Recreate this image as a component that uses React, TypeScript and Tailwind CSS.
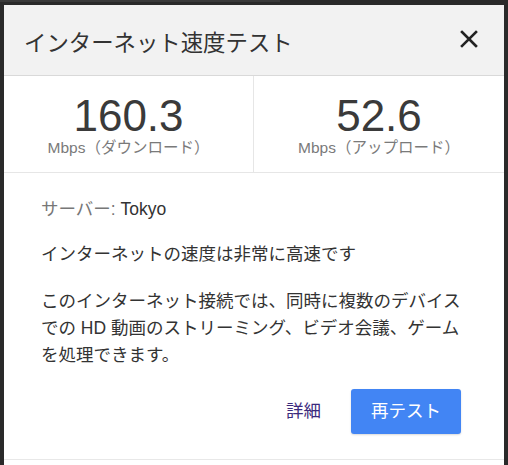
const font = { fontFamily: '"Liberation Sans", "Noto Sans CJK JP", sans-serif' };

function CloseIcon() {
  return (
    <svg width="20" height="20" viewBox="0 0 20 20" className="text-[#222] mb-[10px]">
      <path d="M3 3 L17 17 M17 3 L3 17" stroke="currentColor" strokeWidth="2.6" strokeLinecap="square" />
    </svg>
  );
}

function Stat({ value, label, border }: { value: string; label: string; border?: boolean }) {
  return (
    <div className={`flex flex-col items-center pt-[18px] ${border ? 'border-r border-[#e6e6e6]' : ''}`}>
      <div className="text-[44px] leading-[44px] text-[#3a3a3a]">{value}</div>
      <div className="text-[15.5px] leading-[20px] text-[#7a7a7a]">{label}</div>
    </div>
  );
}

export default function App() {
  return (
    <div className="w-[508px] h-[465px] bg-[#2a2a2a] overflow-hidden flex flex-col" style={font}>
      <div className="h-[5px] shrink-0">
        <div className="h-[2px] w-[280px] bg-[#3a3a3a]" />
      </div>
      <div className="ml-[4px] w-[500px] bg-white flex flex-col shrink-0">
        {/* header */}
        <div className="h-[71px] bg-[#f2f2f2] border-b border-[#d9d9d9] flex items-center justify-between pl-[20px] pr-[25px] pt-[8px]">
          <h1 className="text-[22.4px] leading-[28px] text-[#333]">インターネット速度テスト</h1>
          <CloseIcon />
        </div>

        {/* results */}
        <div className="grid grid-cols-2 h-[97px] border-b border-[#e6e6e6]">
          <Stat value="160.3" label="Mbps（ダウンロード）" border />
          <Stat value="52.6" label="Mbps（アップロード）" />
        </div>

        {/* body */}
        <div className="pl-[37px] pt-[23px] text-[17.5px] leading-[27px] text-[#333]">
          <p>
            <span className="text-[#777]">サーバー: </span>Tokyo
          </p>
          <p className="mt-[18px]">インターネットの速度は非常に高速です</p>
          <p className="mt-[20px] w-[424px]">
            このインターネット接続では、同時に複数のデバイスでの HD 動画のストリーミング、ビデオ会議、ゲームを処理できます。
          </p>
        </div>

        <div className="flex items-center justify-end gap-[30px] pr-[43px] pt-[20px] pb-[25px] border-b border-[#e8e8e8]">
          <button className="text-[17.5px] text-[#3c2a7d]">詳細</button>
          <button className="w-[110px] h-[45px] rounded-[3px] bg-[#4285f4] text-white text-[17.5px] shadow-[0_1px_2px_rgba(0,0,0,0.15)]">
            再テスト
          </button>
        </div>
        <div className="h-[20px]" />
      </div>
    </div>
  );
}
